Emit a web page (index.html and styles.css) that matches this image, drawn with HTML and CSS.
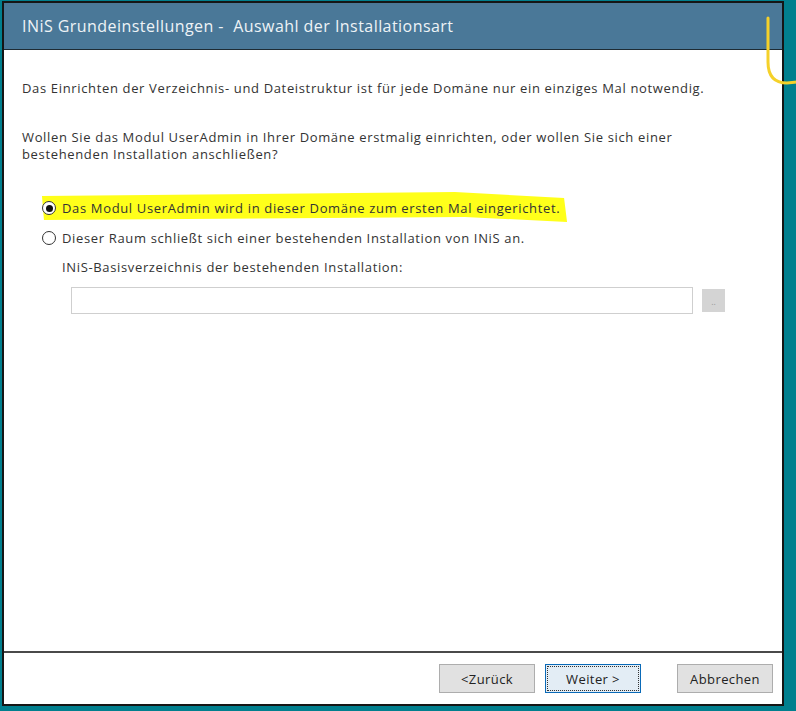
FILE: index.html
```html
<!DOCTYPE html>
<html lang="de">
<head>
    <meta charset="UTF-8">
    <meta name="viewport" content="width=device-width, initial-scale=1.0">
    <title>INiS Grundeinstellungen</title>
    <link rel="stylesheet" href="styles.css">
</head>
<body>
    <div class="dialog">
        <div class="titlebar">INiS Grundeinstellungen - &nbsp;Auswahl der Installationsart</div>

        <div class="content">
            <p class="intro">Das Einrichten der Verzeichnis- und Dateistruktur ist für jede Domäne nur ein einziges Mal notwendig.</p>
            <p class="question">Wollen Sie das Modul UserAdmin in Ihrer Domäne erstmalig einrichten, oder wollen Sie sich einer bestehenden Installation anschließen?</p>

            <div class="options">
                <label class="option marked">
                    <svg class="marker" viewBox="0 0 540 34" preserveAspectRatio="none">
                        <path d="M4 6 L420 2 L530 8 L533 32 L430 27 L6 30 Z" fill="#ffff1a"/>
                    </svg>
                    <span class="radio checked"></span>
                    <span class="text">Das Modul UserAdmin wird in dieser Domäne zum ersten Mal eingerichtet.</span>
                </label>
                <label class="option">
                    <span class="radio"></span>
                    <span class="text">Dieser Raum schließt sich einer bestehenden Installation von INiS an.</span>
                </label>
            </div>

            <div class="existing">
                <div class="field-label">INiS-Basisverzeichnis der bestehenden Installation:</div>
                <div class="field-row">
                    <div class="input"></div>
                    <div class="browse">..</div>
                </div>
            </div>
        </div>

        <div class="footer">
            <button class="btn">&lt;Zurück</button>
            <button class="btn focused"><span>Weiter &gt;</span></button>
            <button class="btn cancel">Abbrechen</button>
        </div>
    </div>

    <!-- pen stroke in the corner -->
    <svg class="scribble" viewBox="0 0 40 90">
        <path d="M11 18 L11 62 Q11 83 30 83 L40 82" fill="none" stroke="#f5d12a" stroke-width="3" stroke-linecap="round"/>
    </svg>
</body>
</html>
```

FILE: styles.css
```css
body {
    margin: 0;
    height: 711px;
    background: #017f8e;
    font-family: "Open Sans", "Noto Sans", sans-serif;
    color: #333;
    overflow: hidden;
}
.dialog {
    position: relative;
    margin: 1px 0 0 2px;
    width: 778px;
    height: 701px;
    border: 2px solid #151515;
    background: #fff;
    display: flex;
    flex-direction: column;
}
.titlebar {
    height: 46px;
    background: #4a7898;
    border-bottom: 1px solid #1e2b33;
    color: #eef3f6;
    font-size: 16px;
    letter-spacing: 0.45px;
    line-height: 46px;
    padding-left: 18px;
}
.content {
    flex: 1;
    padding: 0 18px;
    font-size: 13px;
    letter-spacing: 0.65px;
}
.intro {
    margin: 30px 0 0;
    line-height: 17px;
}
.question {
    margin: 32px 0 0;
    line-height: 17px;
    width: 700px;
}
.options {
    margin-top: 30px;
    padding-left: 20px;
}
.option {
    position: relative;
    display: flex;
    align-items: center;
    height: 30px;
}
.option .text {
    position: relative;
    margin-left: 6px;
}
.marker {
    position: absolute;
    left: -4px;
    top: -3px;
    width: 536px;
    height: 34px;
}
.radio {
    position: relative;
    width: 14px;
    height: 14px;
    border: 1px solid #333;
    border-radius: 50%;
    background: #fff;
    box-sizing: border-box;
}
.radio.checked::after {
    content: "";
    position: absolute;
    left: 2.5px;
    top: 2.5px;
    width: 7px;
    height: 7px;
    border-radius: 50%;
    background: #111;
}
.existing {
    padding-left: 40px;
}
.field-label {
    margin-top: 6px;
    line-height: 17px;
}
.field-row {
    display: flex;
    align-items: center;
    margin-top: 11px;
    padding-left: 9px;
}
.input {
    width: 620px;
    height: 25px;
    border: 1px solid #cfcfcf;
}
.browse {
    margin-left: 9px;
    width: 23px;
    height: 23px;
    background: #d4d4d4;
    color: #9a9a9a;
    font-size: 9px;
    letter-spacing: 0;
    text-align: center;
    line-height: 26px;
}
.footer {
    height: 51px;
    border-top: 2px solid #4a4a4a;
    display: flex;
    align-items: center;
    padding: 0 9px 0 435px;
}
.btn {
    width: 96px;
    height: 29px;
    border: 1px solid #adadad;
    background: #e1e1e1;
    font-family: inherit;
    font-size: 13px;
    letter-spacing: 0.4px;
    color: #222;
    padding: 0;
}
.btn + .btn {
    margin-left: 10px;
}
.btn.focused {
    border: 1px solid #0a6ab8;
    background: #e3edf5;
    padding: 1px;
}
.btn.focused span {
    display: flex;
    align-items: center;
    justify-content: center;
    height: 100%;
    border: 1px dotted #333;
    box-sizing: border-box;
}
.btn.cancel {
    margin-left: 36px;
}
.scribble {
    position: absolute;
    left: 757px;
    top: 0;
    width: 40px;
    height: 90px;
}
```
